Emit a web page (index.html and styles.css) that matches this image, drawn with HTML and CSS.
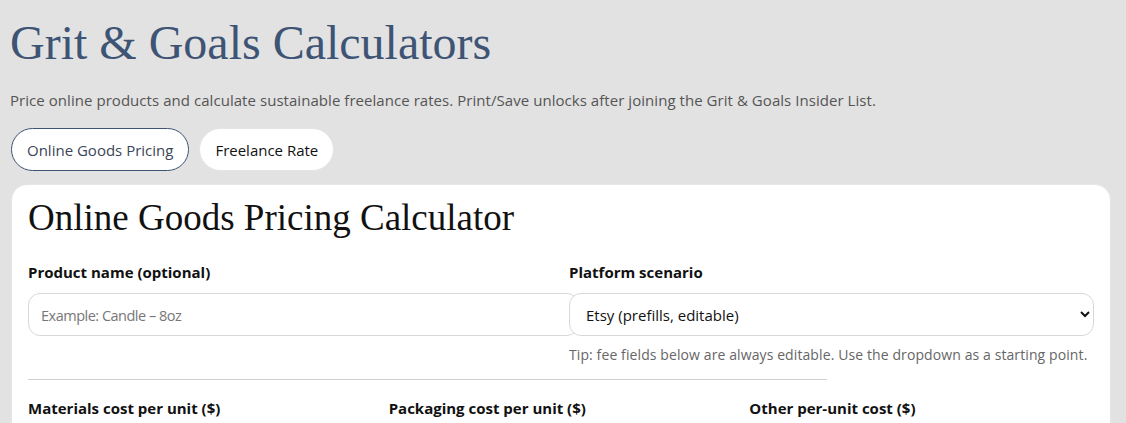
FILE: index.html
```html
<!DOCTYPE html>
<html lang="en">
<head>
<meta charset="utf-8">
<title>Grit &amp; Goals Calculators</title>
<link rel="stylesheet" href="styles.css">
</head>
<body>
<header class="page-head">
  <h1 class="site-title">Grit &amp; Goals Calculators</h1>
  <p class="intro">Price online products and calculate sustainable freelance rates. Print/Save unlocks after joining the Grit &amp; Goals Insider List.</p>
  <nav class="tabs">
    <button class="tab tab-active" type="button">Online Goods Pricing</button>
    <button class="tab" type="button">Freelance Rate</button>
  </nav>
</header>
<main class="card">
  <h2 class="card-title">Online Goods Pricing Calculator</h2>
  <div class="grid two">
    <div class="field">
      <label class="label" for="pname">Product name (optional)</label>
      <input class="input text-input" id="pname" type="text" placeholder="Example: Candle – 8oz">
    </div>
    <div class="field">
      <label class="label" for="platform">Platform scenario</label>
      <select class="input select" id="platform">
        <option>Etsy (prefills, editable)</option>
      </select>
      <p class="tip">Tip: fee fields below are always editable. Use the dropdown as a starting point.</p>
    </div>
  </div>
  <hr class="divider">
  <div class="grid three">
    <div class="field"><label class="label">Materials cost per unit ($)</label></div>
    <div class="field"><label class="label">Packaging cost per unit ($)</label></div>
    <div class="field"><label class="label">Other per-unit cost ($)</label></div>
  </div>
</main>
</body>
</html>
```
FILE: styles.css
```css
html, body {
  margin: 0;
  padding: 0;
}
body {
  background: #e2e2e2;
  font-family: "Open Sans", "Noto Sans", sans-serif;
  color: #111;
  padding: 0 10px;
}
.page-head {
  padding-top: 16px;
}
.site-title {
  margin: 0;
  font-family: "Liberation Serif", serif;
  font-weight: 400;
  font-size: 48px;
  line-height: 54px;
  color: #3e5475;
}
.intro {
  margin: 20px 0 0;
  font-size: 15px;
  line-height: 20px;
  letter-spacing: 0.05px;
  color: #555;
}
.tabs {
  display: flex;
  gap: 10px;
  margin-top: 18px;
  padding-left: 1px;
}
.tab {
  height: 43px;
  padding: 0 15px;
  border-radius: 22px;
  border: 1px solid #e4e4e4;
  background: #fff;
  font-family: "Open Sans", "Noto Sans", sans-serif;
  font-size: 15px;
  color: #111;
}
.tab-active {
  border-color: #3e5475;
  color: #3b4658;
}
.card {
  margin: 13px 0 0 1px;
  max-width: 1100px;
  box-sizing: border-box;
  background: #fff;
  border: 1px solid #e6e6e6;
  border-radius: 16px;
  padding: 11px 16px 40px;
}
.card-title {
  margin: 0;
  font-family: "Liberation Serif", serif;
  font-weight: 400;
  font-size: 37px;
  line-height: 44px;
  color: #111;
}
.grid {
  display: grid;
  gap: 16px;
}
.grid.two {
  grid-template-columns: 1fr 1fr;
  margin-top: 22px;
}
.grid.three {
  grid-template-columns: 1fr 1fr 1fr;
  margin-top: 18px;
}
.field {
  min-width: 0;
}
.label {
  display: block;
  font-weight: 700;
  font-size: 15px;
  line-height: 20px;
  color: #111;
  margin-bottom: 11px;
}
.input {
  display: block;
  width: 100%;
  height: 43px;
  padding: 0 12px;
  border: 1px solid #d8d8d8;
  border-radius: 12px;
  background: #fff;
  font-family: "Open Sans", "Noto Sans", sans-serif;
  font-size: 15px;
  color: #111;
}
.text-input {
  height: 41px;
}
.text-input::placeholder {
  color: #777;
  font-size: 14.5px;
  letter-spacing: -0.5px;
}
.select {
  box-sizing: border-box;
  position: relative;
}
.tip {
  margin: 10px 0 0;
  font-size: 14px;
  line-height: 18px;
  letter-spacing: 0.1px;
  color: #666;
}
.divider {
  width: 799px;
  margin: 15px 0 0;
  border: 0;
  border-top: 1px solid #cfcfcf;
}
```
